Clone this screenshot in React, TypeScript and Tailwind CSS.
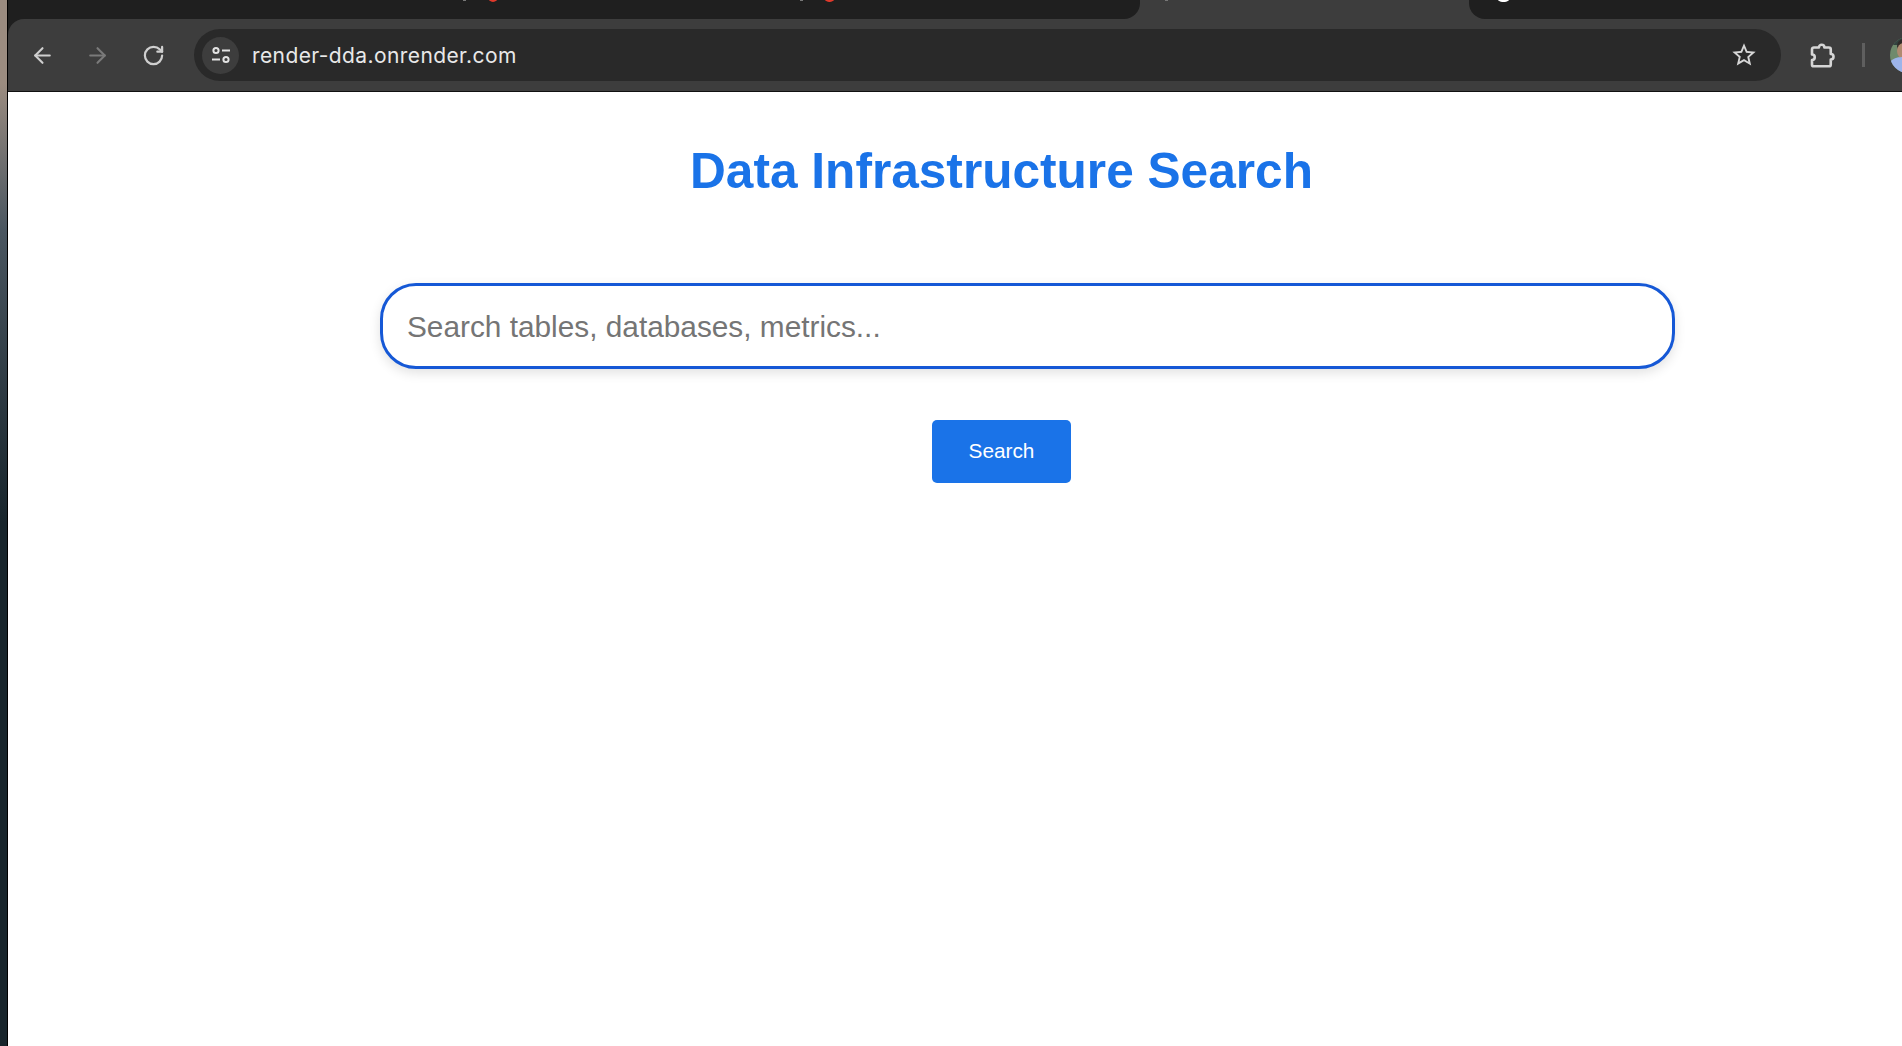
import React from 'react';
import { ArrowLeft, ArrowRight, RotateCw } from 'lucide-react';

const SiteIcon = () => (
  <svg width="22" height="22" viewBox="0 0 22 22" fill="none" stroke="#e3e3e3" strokeWidth="2">
    <circle cx="6" cy="6.5" r="2.6" />
    <path d="M12 6.5h8" />
    <path d="M2 15.5h8" />
    <circle cx="16" cy="15.5" r="2.6" />
  </svg>
);

const StarIcon = () => (
  <svg width="28" height="28" viewBox="0 0 24 24" fill="#d6d6d6" className="ml-auto shrink-0">
    <path d="M22 9.24l-7.19-.62L12 2 9.19 8.63 2 9.24l5.46 4.73L5.82 21 12 17.27 18.18 21l-1.63-7.03L22 9.24zM12 15.4l-3.76 2.27 1-4.28-3.32-2.88 4.38-.38L12 6.1l1.71 4.04 4.38.38-3.32 2.88 1 4.28L12 15.4z" />
  </svg>
);

const ExtensionIcon = () => (
  <svg width="30" height="30" viewBox="0 0 24 24" fill="none" stroke="#d6d6d6" strokeWidth="2.1" strokeLinejoin="round" className="ml-[26px] shrink-0">
    <path d="M5.5 6H9.5a2.2 2.2 0 0 1 4.4 0h3.6A1.5 1.5 0 0 1 19 7.5v3.7a2.2 2.2 0 0 1 0 4.4v3.9a1.5 1.5 0 0 1-1.5 1.5h-12A1.5 1.5 0 0 1 4 19.5V16a2.2 2.2 0 0 0 0-4.4V7.5A1.5 1.5 0 0 1 5.5 6z" />
  </svg>
);

const Avatar = () => (
  <svg width="36" height="36" viewBox="0 0 36 36" className="shrink-0">
    <defs>
      <clipPath id="av">
        <circle cx="18" cy="18" r="18" />
      </clipPath>
    </defs>
    <g clipPath="url(#av)">
      <rect width="36" height="36" fill="#6f8a6c" />
      <rect width="36" height="8" fill="#33423f" />
      <circle cx="14" cy="9" r="7" fill="#2f2a28" />
      <ellipse cx="14" cy="14" rx="7" ry="8" fill="#b08a70" />
      <path d="M0 36V25c3-4 8-5 14-5s14 1 22 5v11z" fill="#9db4ea" />
    </g>
  </svg>
);

const App: React.FC = () => {
  return (
    <div className="flex h-[1046px] w-[1902px] overflow-hidden bg-white font-['Liberation_Sans',sans-serif]">
      <div className="w-[7px] shrink-0 bg-linear-to-b from-[#9b8c80] from-[8%] via-[#4a5660] via-[22%] to-[#18252c] to-[50%]" />
      <div className="flex min-w-0 flex-1 flex-col border-l border-black">
        {/* tab strip */}
        <div className="flex h-[19px] shrink-0 bg-[#3d3d3d]">
          <div className="relative h-full w-[1132px] rounded-br-[16px] bg-[#1f1f1f]">
            <span className="absolute left-[455px] top-0 h-px w-[3px] bg-[#777]" />
            <span className="absolute left-[480px] top-[-3px] h-[5px] w-[10px] rounded-b-full bg-[#e0392b]" />
            <span className="absolute left-[792px] top-0 h-px w-[3px] bg-[#777]" />
            <span className="absolute left-[816px] top-[-3px] h-[5px] w-[11px] rounded-b-full bg-[#e0392b]" />
          </div>
          <div className="relative w-[329px]">
            <span className="absolute left-[25px] top-0 h-px w-[3px] bg-[#777]" />
          </div>
          <div className="relative h-full flex-1 rounded-bl-[16px] bg-[#1f1f1f]">
            <span className="absolute left-[28px] top-[-3px] h-[5px] w-[13px] rounded-b-full bg-white" />
          </div>
        </div>
        {/* toolbar */}
        <div className="shrink-0 bg-[#1f1f1f]">
          <div className="flex h-[73px] items-center rounded-tl-[16px] border-b border-[#111] bg-[#3d3d3d]">
            <div className="flex w-[186px] shrink-0 items-center pl-[22px] text-[#cfcfcf]">
              <ArrowLeft size={25} strokeWidth={2} />
              <ArrowRight size={25} strokeWidth={2} className="ml-[30px] text-[#7a7a7a]" />
              <RotateCw size={23} strokeWidth={2.3} className="ml-[32px]" />
            </div>
            <div className="flex h-[52px] w-[1587px] shrink-0 items-center rounded-full bg-[#292929] pl-[8px] pr-[23px]">
              <div className="flex h-[37px] w-[37px] shrink-0 items-center justify-center rounded-full bg-[#3d3d3d]">
                <SiteIcon />
              </div>
              <span className="ml-[13px] pt-[1px] font-['Inter',sans-serif] text-[21px] tracking-[0.4px] text-[#e8e8e8]">render-dda.onrender.com</span>
              <StarIcon />
            </div>
            <ExtensionIcon />
            <div className="ml-[25px] h-[24px] w-[3px] shrink-0 bg-[#5f5f5f]" />
            <div className="ml-[25px] shrink-0">
              <Avatar />
            </div>
          </div>
        </div>
        {/* page */}
        <div className="flex min-h-0 flex-1 flex-col items-center bg-white pl-[93px]">
          <h1 className="mt-[52px] text-[49.6px] font-bold leading-[55px] text-[#1a73e8]">Data Infrastructure Search</h1>
          <div className="mt-[84px] w-[1243px]">
            <input
              placeholder="Search tables, databases, metrics..."
              className="h-[86px] w-[1295px] rounded-[36px] border-[3px] border-[#1558d6] bg-white px-[24px] pt-[2px] text-[29.8px] shadow-[0_4px_12px_rgba(0,0,0,0.12)] outline-none placeholder:text-[#757575]"
            />
          </div>
          <button className="mt-[51px] h-[63px] w-[139px] rounded-[5px] bg-[#1a73e8] pb-[2px] text-[20.8px] font-medium text-white">Search</button>
        </div>
      </div>
    </div>
  );
};

export default App;
